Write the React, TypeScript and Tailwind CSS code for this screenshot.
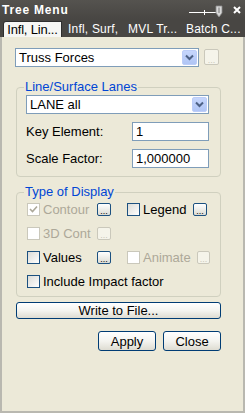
import React from "react";

const font = { fontFamily: '"Liberation Sans", Arial, sans-serif' };

function Chevron() {
  return (
    <svg width="9" height="7" viewBox="0 0 9 7">
      <path d="M1 1.5 L4.5 5 L8 1.5" fill="none" stroke="#4d6185" strokeWidth="2" />
    </svg>
  );
}

function Combo({ text, w }: { text: string; w: string }) {
  return (
    <div className={`${w} h-[19px] bg-white border border-[#7f9db9] flex items-center`}>
      <span className="flex-1 pl-[3px] text-[13px] leading-[15px] text-black">{text}</span>
      <div className="w-[15px] h-[15px] mr-[1px] rounded-[2px] bg-gradient-to-b from-[#c6d6fc] to-[#b0c5f5] border border-[#bccdf8] flex items-center justify-center">
        <Chevron />
      </div>
    </div>
  );
}

function Dots({ disabled, w = "w-[14px]", h = "h-[13px]" }: { disabled?: boolean; w?: string; h?: string }) {
  return (
    <div
      className={`${w} ${h} rounded-[2px] border flex items-end justify-center pb-[1px] ${
        disabled ? "border-[#cac8bb] bg-[#f5f4ea]" : "border-[#1c5180] bg-gradient-to-b from-white to-[#dcdcd4]"
      }`}
    >
      <span className={`text-[9px] leading-[6px] ${disabled ? "text-[#c9c7ba]" : "text-black"}`}>...</span>
    </div>
  );
}

function Check({ disabled, checked }: { disabled?: boolean; checked?: boolean }) {
  return (
    <div
      className={`w-[13px] h-[13px] shrink-0 border flex items-center justify-center ${
        disabled ? "border-[#cac8bb] bg-white" : "border-[#1c5180] bg-gradient-to-br from-[#dcdcd7] to-white"
      }`}
    >
      {checked && (
        <svg width="9" height="9" viewBox="0 0 9 9">
          <path d="M1 4 L3.5 6.5 L8 1.5" fill="none" stroke="#aca899" strokeWidth="1.6" />
        </svg>
      )}
    </div>
  );
}

function Item({
  label,
  disabled,
  checked,
  w,
}: {
  label: string;
  disabled?: boolean;
  checked?: boolean;
  w: string;
}) {
  return (
    <div className={`${w} flex items-center gap-[3px] h-[13px]`}>
      <Check disabled={disabled} checked={checked} />
      <span className={`text-[13px] leading-[15px] whitespace-nowrap ${disabled ? "text-[#aca899]" : "text-black"}`}>
        {label}
      </span>
    </div>
  );
}

function Group({
  title,
  children,
  className,
  legendMl,
}: {
  title: string;
  children: React.ReactNode;
  className?: string;
  legendMl: string;
}) {
  return (
    <div className={`w-[205px] border border-[#d0d0bf] rounded-[4px] ${className ?? ""}`}>
      <div className={`-mt-[9px] ${legendMl} w-fit h-[15px] px-[1px] bg-[#ece9d8] text-[13px] leading-[15px] text-[#0046d5]`}>
        {title}
      </div>
      {children}
    </div>
  );
}

function XpButton({ children, w, h = "h-[20px]" }: { children: React.ReactNode; w: string; h?: string }) {
  return (
    <div
      className={`${w} ${h} rounded-[3px] border border-[#003c74] bg-gradient-to-b from-white via-[#f4f4f0] to-[#dedcd2] flex items-center justify-center text-[13px] leading-[15px] text-black`}
    >
      {children}
    </div>
  );
}

export default function App() {
  return (
    <div className="w-[245px] h-[413px] bg-[#ece9d8] flex flex-col overflow-hidden" style={font}>
      {/* Title bar */}
      <div className="h-[19px] bg-gradient-to-b from-[#55534f] to-[#484643] flex items-center pl-[2px] pr-[4px]">
        <span className="text-[12px] font-bold tracking-[0.8px] text-white leading-[14px]">Tree Menu</span>
        <div className="flex-1" />
        <svg width="36" height="14" viewBox="0 0 36 14" className="mr-[8px]">
          <line x1="0" y1="9.5" x2="28" y2="9.5" stroke="white" strokeWidth="1" />
          <line x1="15.5" y1="7" x2="15.5" y2="12" stroke="white" strokeWidth="1" />
          <path d="M27 3 H33 V10 L30 14 L27 10 Z" fill="#d8d8d8" stroke="#8a8a8a" strokeWidth="0.8" />
          <line x1="30" y1="4.5" x2="30" y2="10" stroke="#777" strokeWidth="1" />
        </svg>
        <svg width="8" height="8" viewBox="0 0 8 8">
          <path d="M1 1 L7 7 M7 1 L1 7" stroke="white" strokeWidth="2" />
        </svg>
      </div>
      {/* Tabs */}
      <div className="h-[18px] bg-[#484643] flex items-end pl-[3px] text-[12px] leading-[15px] whitespace-nowrap">
        <div className="h-[16px] w-[59px] shrink-0 bg-[#f6f6f4] border border-b-0 border-[#2e2e2e] rounded-tl-[3px] flex items-center justify-center text-black text-[13px] tracking-[-0.2px]">
          Infl, Lin...
        </div>
        <div className="h-[16px] flex items-center text-white ml-[6px] tracking-[0.2px]">
          <span className="w-[60px] shrink-0">Infl, Surf,</span>
          <span className="w-[58px] shrink-0">MVL Tr...</span>
          <span className="shrink-0">Batch C...</span>
        </div>
      </div>
      {/* Content */}
      <div className="flex-1 border-l-2 border-r-2 border-b-2 border-[#b9b8b0] pl-[13px] pt-[11px] flex flex-col">
        <div className="flex items-start gap-[5px]">
          <Combo text="Truss Forces" w="w-[184px]" />
          <div className="mt-[1px]">
            <Dots disabled w="w-[15px]" h="h-[16px]" />
          </div>
        </div>

        <Group title="Line/Surface Lanes" legendMl="-ml-[2px]" className="mt-[20px] ml-[1px] pl-[9px] pb-[8px]">
          <div className="mt-[1px]">
            <Combo text="LANE all" w="w-[183px]" />
          </div>
          <div className="mt-[8px] flex items-center">
            <span className="w-[106px] text-[13px] leading-[15px] text-black">Key Element:</span>
            <div className="w-[77px] h-[19px] bg-white border border-[#7f9db9] flex items-center pl-[3px] text-[13px] leading-[15px] text-black">
              1
            </div>
          </div>
          <div className="mt-[8px] flex items-center">
            <span className="w-[106px] text-[13px] leading-[15px] text-black">Scale Factor:</span>
            <div className="w-[77px] h-[19px] bg-white border border-[#7f9db9] flex items-center pl-[3px] text-[13px] leading-[15px] text-black">
              1,000000
            </div>
          </div>
        </Group>

        <Group title="Type of Display" legendMl="-ml-[3px]" className="mt-[15px] ml-[1px] pl-[10px] pb-[8px]">
          <div className="mt-[4px] flex flex-col gap-[11px]">
            <div className="flex items-center">
              <Item label="Contour" disabled checked w="w-[70px]" />
              <Dots />
              <div className="w-[16px]" />
              <Item label="Legend" w="w-[66px]" />
              <Dots />
            </div>
            <div className="flex items-center">
              <Item label="3D Cont" disabled w="w-[70px]" />
              <Dots disabled />
            </div>
            <div className="flex items-center">
              <Item label="Values" w="w-[70px]" />
              <Dots />
              <div className="w-[16px]" />
              <Item label="Animate" disabled w="w-[70px]" />
              <Dots disabled w="w-[13px]" />
            </div>
            <div className="flex items-center">
              <Item label="Include Impact factor" w="w-[160px]" />
            </div>
          </div>
        </Group>

        <div className="mt-[5px] ml-[1px]">
          <XpButton w="w-[205px]" h="h-[17px]">
            Write to File...
          </XpButton>
        </div>
        <div className="mt-[12px] w-[206px] flex justify-end gap-[7px]">
          <XpButton w="w-[58px]">Apply</XpButton>
          <XpButton w="w-[58px]">Close</XpButton>
        </div>
      </div>
    </div>
  );
}
